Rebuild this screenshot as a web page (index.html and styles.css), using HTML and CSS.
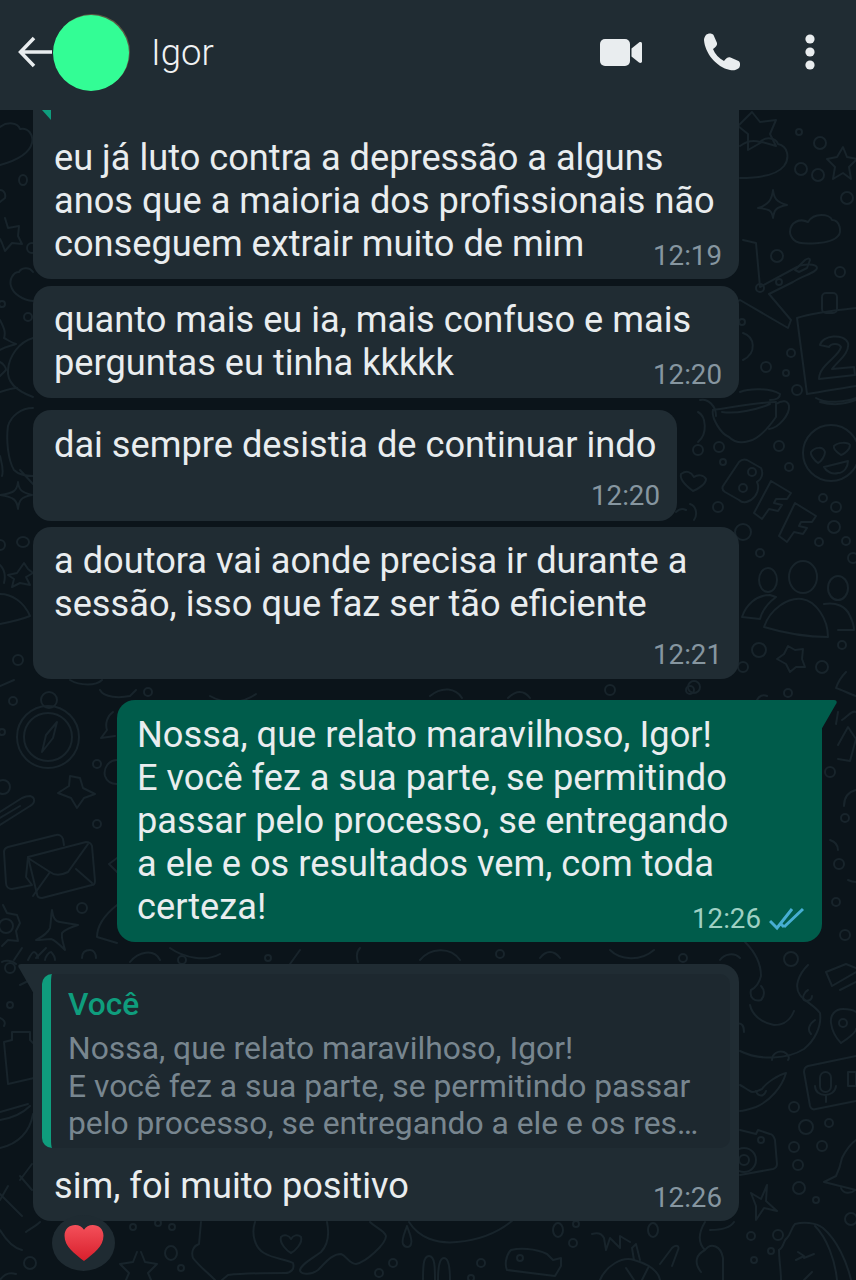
FILE: index.html
```html
<!DOCTYPE html>
<html lang="pt">
<head>
<meta charset="utf-8">
<title>Igor</title>
<link rel="stylesheet" href="styles.css">
</head>
<body>
<div class="app">
  <header class="topbar">
    <svg class="back" viewBox="0 0 36 32"><path d="M34 16H3M16 2 2.500 16 16 30"/></svg>
    <div class="avatar"></div>
    <div class="name">Igor</div>
    <div class="actions">
      <svg class="ic-video" viewBox="0 0 42 28"><rect x="0" y="0" width="30" height="27" rx="5"/><path d="M31.500 9.500 39 3.500c1.200-.9 3-.4 3 1v18c0 1.400-1.800 1.900-3 1L31.500 17.500z"/></svg>
      <svg class="ic-phone" viewBox="0 0 38 38"><path d="M3 2C5 0 9 0 10.500 2L14 10C14.500 12 13 14 10 16C12 21 16 25.500 21 28C23 25 25.500 23.500 27.500 24.500L35.500 28C37.500 29 37.500 33 36 35C33 37.500 30 37.500 27 37C13 34 2 20 1 7C1 5 2 3 3 2z"/></svg>
      <svg class="ic-dots" viewBox="0 0 12 36"><circle cx="6" cy="5" r="4.600"/><circle cx="6" cy="18" r="4.600"/><circle cx="6" cy="31" r="4.600"/></svg>
    </div>
  </header>
  <main class="chat">
    <svg class="doodles" viewBox="0 110 856 1170">
      <!-- right margin, upper -->
      <path d="M752 112l8 10 16-2-6 14 6 12-14-4-14 8 0-16-10-8z"/>
      <circle cx="799" cy="132" r="3"/><circle cx="820" cy="143" r="6"/><circle cx="801" cy="169" r="6"/><circle cx="818" cy="175" r="6"/><circle cx="847" cy="198" r="6"/>
      <path d="M740 146c8-6 14-6 20-4 6-6 16-4 18 2 10 2 12 14 6 22-8 10-26 12-44 12"/>
      <path d="M843 147l4 10 10 2-8 8 2 12-8-6-10 6 2-12-8-8 10-2z"/>
      <path d="M773 190c1 8 3 12 14 15-11 2-13 5-14 13-1-8-4-9-15-10 10-3 14-8 15-18z"/>
      <path d="M790 232c0-10 10-14 18-10 6-10 22-8 24-2 8 0 10 12 6 16-6 8-38 10-44 4-2-2-4-4-4-8z"/>
      <path d="M743 240l13 3 4 44 37-20c5-3 20-4 20 1 0 4-12 7-24 14l-24 12 22 26-3 8-48-28-16 10"/>
      <path d="M795 270l10-10c3-2 5-2 5 0l-3 8-8 4z"/>
      <circle cx="777" cy="256" r="6"/><circle cx="840" cy="272" r="5"/><circle cx="760" cy="288" r="4"/><circle cx="779" cy="282" r="3"/><circle cx="742" cy="322" r="3"/>
      <path d="M797 318c12-4 40-8 59-10M797 318l10 76c14-2 36-6 49-8"/>
      <rect x="822" y="293" width="15" height="20" rx="4"/>
      <path d="M820 345c2-10 24-12 28-2 2 10-10 18-16 26l22-2 1 8-36 4c0-14 20-22 22-32-2-4-10-4-12 0z"/>
      <path d="M743 333c12 4 14 20 0 27"/>
      <circle cx="791" cy="353" r="4"/><circle cx="766" cy="367" r="5"/><circle cx="786" cy="373" r="3"/><circle cx="797" cy="390" r="5"/>
      <path d="M740 392c10-4 30-4 40 2 0 4-4 6-10 6M816 398c10 6 30 4 40 0M820 402c14 4 26 2 36-2"/>
      <!-- cup and face -->
      <path d="M713 410c-2 8 8 24 16 27 6 6 14 6 20 4 10-2 20-14 27-24l0-14"/>
      <path d="M713 410c16-2 44-8 63-8M722 412c14 2 34-2 48-8"/>
      <path d="M776 404c6-4 12-4 13 2 1 8-10 22-20 23"/>
      <path d="M698 412c8 4 10 22 0 30M700 400c8-2 16 6 16 16"/>
      <circle cx="831" cy="453" r="28"/>
      <path d="M811 452c4-5 12-6 14 0 0 4-4 10-7 11-3-2-8-8-7-11z"/>
      <path d="M834 446c4-4 14-4 16-1 0 5-6 9-9 10-3-2-8-6-7-9z"/>
      <path d="M824 467l24-6c0 6-4 12-10 12-6 2-12-2-14-6z"/>
      <circle cx="698" cy="450" r="5"/><circle cx="719" cy="447" r="5"/><circle cx="723" cy="462" r="3"/><circle cx="779" cy="446" r="5"/><circle cx="789" cy="467" r="4"/>
      <path d="M681 474c6-4 10-2 13 3 4-3 10-2 12 2 0 5-8 10-13 12-4-3-14-10-12-17z"/>
      <!-- B F F -->
      <path d="M747 460l14 8c3 6 0 12-4 14 3 6 0 14-6 18-4 2-8 4-12 0l-14-8c-3-2-3-4-2-6l16-24c2-2 5-3 8-2z"/>
      <circle cx="752" cy="472" r="4"/><circle cx="743" cy="488" r="4"/>
      <path d="M771 481l20 12-4 6-11 0-2 4 8 2-4 6-9-2-7 10-8-6z"/>
      <path d="M795 503l21 13-4 6-11 0-2 4 8 2-4 6-9-2-7 10-8-6z"/>
      <circle cx="718" cy="507" r="5"/><circle cx="743" cy="532" r="8"/><circle cx="760" cy="553" r="4"/><circle cx="823" cy="498" r="4"/><circle cx="836" cy="507" r="5"/><circle cx="834" cy="527" r="6"/><circle cx="819" cy="542" r="4"/><circle cx="846" cy="541" r="4"/><circle cx="853" cy="558" r="5"/>
      <path d="M686 510c-4-2-8 0-10 2M690 504c6 2 8 10 4 16"/>
      <!-- people -->
      <ellipse cx="803" cy="577" rx="14" ry="16"/><ellipse cx="768" cy="580" rx="9" ry="12"/><ellipse cx="838" cy="588" rx="10" ry="12"/>
      <path d="M764 627c6-18 24-30 38-28 14 2 26 20 26 38-20 0-44-4-64-10z"/>
      <path d="M742 617c4-12 14-22 28-22l6 2c-8 6-14 14-16 22z"/>
      <path d="M824 604c12-2 22 2 26 12 4 8 4 14 4 14l-16 0"/>
      <circle cx="842" cy="645" r="4"/><circle cx="759" cy="650" r="7"/><circle cx="743" cy="667" r="5"/><circle cx="822" cy="667" r="6"/><circle cx="694" cy="687" r="6"/><circle cx="788" cy="693" r="4"/>
      <path d="M788 646l7 4 8-1-1 10 3 8-9 0-6 5-4-8-9-5 7-5z"/>
      <path d="M846 672c-4 4-8 10-10 16 6 2 14 6 20 8M757 700c2-4 6-6 10-4"/>
      <!-- right margin lower -->
      <path d="M838 712l-2 12M842 720c6-4 10-10 14-8M838 745l10-18 8 12-6 22-12-2"/>
      <circle cx="830" cy="772" r="5"/><circle cx="845" cy="818" r="4"/><circle cx="839" cy="864" r="5"/><circle cx="836" cy="902" r="4"/><circle cx="845" cy="935" r="5"/>
      <path d="M856 790c-8 2-12 8-12 16M830 840c6 2 8 6 8 10M848 880c4 2 8 2 8 2"/>
      <!-- compass, star, clip, letters -->
      <circle cx="48" cy="737" r="31"/><circle cx="48" cy="737" r="24"/><circle cx="49" cy="700" r="8"/>
      <path d="M57 722l-4 16-11 14 4-17z"/>
      <circle cx="13" cy="701" r="4"/><circle cx="97" cy="764" r="4"/><circle cx="97" cy="824" r="4"/><circle cx="82" cy="908" r="5"/><circle cx="2" cy="732" r="3"/>
      <path d="M80 778l3 10 12 6-11 4-7 10-6-10-13-5 11-7 1-10z"/>
      <circle cx="3" cy="787" r="7"/>
      <path d="M0 825l30-19c6-3 5-9 0-10-3 0-6 1-8 2L0 812M0 818l20-12"/>
      <path d="M28 857l-2 20 6 8-20 4c-3 0-6-2-6-6L4 852c0-3 1-4 4-5l48-12c3-1 6 1 7 4l1 6"/>
      <path d="M28 857l58-15c3 0 5 1 6 4l3 35c0 2-1 4-3 4l-50 13c-3 0-5-1-5-4z"/><path d="M28 858l22 14c5 4 12 3 18 0l20-28M33 896l17-24M76 869l16 14"/>
      <path d="M3 905l4 8 10 2 3 8-4 8 2 10-10-1-6 6"/><circle cx="6" cy="926" r="7"/>
      <path d="M52 910c1 8 3 12 8 12 6 1 12 2 18 3-7 2-13 5-16 8-1 6 2 12 3 17-6-6-10-10-14-11-4 0-10 1-15 1 7-4 12-7 14-12 1-6 1-12 2-18z"/>
      <path d="M28 960c2-4 4-8 6-8 2 0 4 4 4 6M45 960c0-3 4-8 6-8 2 2 4 6 4 8M82 958c0-6 4-8 8-8 4 0 6 4 6 8M2 962c2-2 10-2 14 2"/>
      <path d="M113 712c-6 4-8 12-6 18l-6 8 14-2M117 760c-8 0-14 8-12 16 2 6 6 8 12 8M117 858l-8 6 8 8M117 905c-10 8-20 20-20 32l20 6"/>
      <path d="M100 690c4 8 20 8 30 6l6-6M0 686l14-6M70 680c10 6 26 6 32 0M210 696c14 8 32 8 46-2M430 696c12-10 26-8 32 2M508 698c8-8 16-8 22 0"/>
      <circle cx="148" cy="692" r="4"/><circle cx="610" cy="690" r="5"/><circle cx="690" cy="690" r="4"/>
      <!-- gap 942-964 -->
      <path d="M130 962c8-10 24-14 30-2M170 948c14 10 36 14 50 6M300 950l-10 14M358 962c-2-6-2-10 2-14M420 960c10-12 30-14 40 0M540 958c6-8 14-8 20 0M610 950c10 10 30 12 44 0M720 960c4-6 14-8 20-2"/>
      <circle cx="182" cy="960" r="4"/><circle cx="268" cy="958" r="3"/><circle cx="500" cy="954" r="4"/><circle cx="683" cy="958" r="4"/>
      <!-- left margin upper -->
      <path d="M0 127c8-6 18-4 20 2 8-2 14 6 12 14-2 8-10 16-32 22"/>
      <ellipse cx="23" cy="180" rx="4" ry="5"/>
      <path d="M0 190c4 0 6 4 5 8l-5 4"/>
      <path d="M5 218l3 10 11-2-1 10 4 8-10-1-7 8-3-8-2-4"/>
      <circle cx="32" cy="248" r="5"/>
      <path d="M33 272c-4-6-12-4-14 0-6 0-10 8-8 14 2 8 12 14 22 15"/>
      <ellipse cx="28" cy="317" rx="4" ry="4"/><circle cx="2" cy="304" r="3"/>
      <path d="M0 320c4 8 6 12 4 18 4 2 6 4 12 6-6 2-10 2-16 6"/>
      <path d="M33 338c-14 4-24 18-25 32-1 10 6 20 25 27"/>
      <path d="M0 362c4 2 6 6 6 8l-6 6M0 392c6-2 12-4 17-4"/>
      <path d="M33 408c-12 0-22 8-25 18-2 14 0 34 6 44 4 4 10 6 19 6M0 456c2 8 4 14 2 20M20 470l13 14"/>
      <path d="M18 482c1 8 3 10 14 13-11 2-13 5-14 14-1-9-4-12-18-14 14-2 17-4 18-13z"/>
      <ellipse cx="23" cy="542" rx="6" ry="5"/><circle cx="0" cy="545" r="5"/>
      <path d="M24 563l4 6 5 4-7 4 4 8-10-2-8 4 2-8-6-4 9-2z"/>
      <path d="M0 594c12 0 24 8 30 22-10 4-20 6-30 8M0 565c4 4 6 10 4 18"/>
      <circle cx="18" cy="660" r="5"/>
      <!-- left margin lower -->
      <circle cx="10" cy="968" r="5"/><circle cx="10" cy="1005" r="3"/>
      <path d="M20 985l12-6M14 960l8-12M36 958l10-10"/>
      <path d="M12 1032h18l0 8 4 4v34l-26 6-4-42 8-2zM0 1018c4 2 6 4 4 8"/>
      <path d="M0 1112l28-8M0 1148c18-4 30-16 33-34M0 1120c12-2 22-6 30-14"/>
      <path d="M0 1194l22 22M8 1186l-8 14M20 1176l12 14M32 1164l-12 16"/>
      <circle cx="30" cy="1263" r="6"/>
      <path d="M40 1222c-4 4-12 8-14 10M0 1230c6 10 14 18 22 20M0 1280c4-6 10-8 16-6"/>
      <!-- bottom strip -->
      <path d="M141 1252l4 10 12 2-9 9 3 7M137 1252l-4 10-13 2 9 9-3 7"/>
      <circle cx="133" cy="1227" r="3"/><circle cx="158" cy="1223" r="3"/><circle cx="172" cy="1227" r="3"/><ellipse cx="171" cy="1253" rx="6" ry="7"/><circle cx="181" cy="1268" r="3"/>
      <path d="M201 1222l-2 22c-6 2-8 8-6 14 6 8 14 14 22 22"/>
      <path d="M255 1222c-4 12 0 26 9 31 10 6 22 6 29 10 2 6-2 10-8 10-18 0-38 0-57 2l-6 5"/>
      <path d="M281 1237c3-3 8-2 10 2 2-4 7-5 10-2 2 6-6 14-10 16-4-2-12-10-10-16z"/>
      <path d="M327 1222c2 10 2 22-6 30-8 6-20 12-21 18 0 4 10 6 18 0 8-8 14-16 23-16 6 2 8 10 15 10 10-2 30-20 30-28-2-6-10-8-16-14"/>
      <path d="M407 1226c-2 6-6 14-4 18 2 4 7 4 8 0 2-4-2-12-4-18z"/>
      <path d="M409 1222c10 16 28 22 48 20 22-2 42-10 56-22"/>
      <path d="M423 1280c0-12 0-24 6-24 6 0 6 12 6 24M438 1280c0-12 1-22 6-22 5 0 6 10 6 22"/>
      <circle cx="393" cy="1263" r="4"/><circle cx="379" cy="1273" r="4"/><circle cx="481" cy="1263" r="4"/><circle cx="471" cy="1278" r="3"/>
      <path d="M511 1250c8-2 24-2 36 4l6 6 8-2 0 8-6 10-48-6c-2-4-2-14 4-20z"/><circle cx="520" cy="1258" r="3"/>
      <ellipse cx="558" cy="1230" rx="5" ry="7"/><circle cx="576" cy="1224" r="3"/><circle cx="573" cy="1243" r="4"/><ellipse cx="653" cy="1230" rx="5" ry="7"/>
      <path d="M592 1234c6-2 10 0 12 4l2 12 4-12 10 10 0-12 10 6"/>
      <path d="M600 1280c6-14 22-24 34-20 14 4 24 10 26 20M634 1260l-2-12 4-4 4 16M660 1264l12-16c4-4 8-2 6 2l-6 16M626 1268l8 12M648 1268l-6 12"/>
      <path d="M705 1222c-6 10-8 20 0 28-8 4-12 12-4 22M705 1250c6-8 16-4 18 8l0 22M710 1230c10 0 20-2 24-8"/>
      <circle cx="751" cy="1236" r="4"/><circle cx="778" cy="1235" r="5"/><circle cx="771" cy="1251" r="3"/><circle cx="754" cy="1260" r="3"/>
      <path d="M779 1250c6-4 4-10 8-12 4-4 4-10 8-14 8-2 20-2 28 4 14 12 24 34 28 52"/>
      <path d="M815 1226c12 12 20 34 22 54M779 1250c0 10 2 20 2 30M796 1260l8-4-6-4M814 1254l-10 4M812 1272l-8 8"/>
      <!-- right margin bottom -->
      <circle cx="791" cy="959" r="7"/>
      <path d="M745 942c10 10 16 22 16 34-2 8-6 12-10 14-2 8 4 12 10 10 4-4 4-10 0-14M808 965c-10 10-14 22-8 30 4 6 14 10 20 18 2 14-6 28-16 36-16 10-44 12-64 2"/>
      <path d="M750 1005c2 10 12 18 24 20 10 0 16-4 20-14M808 990c-4 2-6 8-4 10 4 2 8 0 8-4M736 1024c6-2 8 2 8 8M815 1020c-6 4-8 10-4 14M772 1060c0-6 6-10 12-8 4 2 6 6 4 8"/>
      <path d="M826 972l20-8 10 4M826 972l6 14 24-14M840 990l16-8"/>
      <path d="M843 1009c-8 0-13 6-12 14 1 8 6 16 10 20 6-4 15-10 15-14M856 1012c-4-3-8-3-13-3"/><circle cx="843" cy="1023" r="4"/>
      <path d="M856 1056l-48 10c-3 1-4 3-4 6l6 34c1 3 3 4 6 3l40-8"/>
      <rect x="820" y="1072" width="11" height="20" rx="5.500"/><path d="M815 1086c0 12 20 12 21 0M826 1096v6"/>
      <path d="M848 1072h8v14h-8z"/>
      <path d="M786 1073c-8 2-20 10-24 16-4 2-10 4-12 2-4-2-6-4-10-6M786 1073c-4 14-16 28-30 34-6 2-12 4-16 4"/><path d="M756 1091c2 6 8 6 10 0"/>
      <circle cx="794" cy="1107" r="5"/><circle cx="806" cy="1127" r="7"/><circle cx="829" cy="1123" r="4"/><circle cx="794" cy="1147" r="5"/><circle cx="822" cy="1146" r="5"/><circle cx="798" cy="1165" r="5"/><circle cx="799" cy="1188" r="6"/><circle cx="816" cy="1200" r="3"/><circle cx="851" cy="1219" r="6"/>
      <path d="M740 1130l16 4 2-4 12 4c3 0 4 3 5 6l2 24c0 2-1 4-4 5l-33 6"/><circle cx="744" cy="1160" r="12"/><circle cx="744" cy="1160" r="5"/><circle cx="761" cy="1140" r="3"/>
      <path d="M856 1140c-6 4-10 10-14 18-2 10-4 14-6 18l-12 6 32 8"/><path d="M841 1188c2 6 10 6 14 2"/>
      <path d="M751 1193l10 6 6-14-1 16 11 10-13-3-8 12 0-14z"/>
    </svg>
    <div class="thread">
      <article class="msg in first">
        <span class="cut-bar"></span>
        <p class="text">eu já luto contra a depressão a alguns<br>anos que a maioria dos profissionais não<br>conseguem extrair muito de mim</p>
        <div class="meta over"><span class="time">12:19</span></div>
      </article>
      <article class="msg in gap-s">
        <p class="text">quanto mais eu ia, mais confuso e mais<br>perguntas eu tinha kkkkk</p>
        <div class="meta over"><span class="time">12:20</span></div>
      </article>
      <article class="msg in short gap-m">
        <p class="text">dai sempre desistia de continuar indo</p>
        <div class="meta own"><span class="time">12:20</span></div>
      </article>
      <article class="msg in gap-xs">
        <p class="text">a doutora vai aonde precisa ir durante a<br>sessão, isso que faz ser tão eficiente</p>
        <div class="meta own"><span class="time">12:21</span></div>
      </article>
      <article class="msg out gap-l">
        <svg class="tail tail-r" viewBox="0 0 16 30"><path d="M0 0h13c2.500 0 3.500 2 2 4L0 30z"/></svg>
        <p class="text">Nossa, que relato maravilhoso, Igor!<br>E você fez a sua parte, se permitindo<br>passar pelo processo, se entregando<br>a ele e os resultados vem, com toda<br>certeza!</p>
        <div class="meta over">
          <span class="time">12:26</span>
          <svg class="ticks" viewBox="0 0 36 24"><path d="M1 14l7 7L23 2M15 20 34 2M12 17l3 3"/></svg>
        </div>
      </article>
      <article class="msg in reply-msg gap-xl">
        <svg class="tail tail-l" viewBox="0 0 16 30"><path d="M16 0H3C.500 0-.500 2 1 4l15 26z"/></svg>
        <div class="quote">
          <div class="quote-who">Você</div>
          <p class="quote-text">Nossa, que relato maravilhoso, Igor!<br>E você fez a sua parte, se permitindo passar<br>pelo processo, se entregando a ele e os res…</p>
        </div>
        <p class="text">sim, foi muito positivo</p>
        <div class="meta over"><span class="time">12:26</span></div>
        <div class="reaction">
          <svg viewBox="0 0 40 38"><defs><linearGradient id="hg" x1="0" y1="0" x2="0" y2="1"><stop offset="0" stop-color="#f4505a"/><stop offset="1" stop-color="#d81f2c"/></linearGradient></defs><path d="M20 37C10 29 0 22 0 11 0 4 5 0 11 0c4 0 7 2 9 5 2-3 5-5 9-5 6 0 11 4 11 11 0 11-10 18-20 26z" fill="url(#hg)"/></svg>
        </div>
      </article>
    </div>
  </main>
</div>
</body>
</html>
```
FILE: styles.css
```css
* { box-sizing: border-box; }
html, body { margin: 0; padding: 0; background: #0b141a; }
body { font-family: Roboto, "Noto Sans", sans-serif; color: #e9edef; }
.app { width: 856px; height: 1280px; display: flex; flex-direction: column; overflow: hidden; }

.topbar { height: 110px; flex: none; background: #202c33; display: flex; align-items: center; padding: 0 40px 6px 18px; position: relative; z-index: 2; }
.back { width: 36px; height: 32px; flex: none; fill: none; stroke: #e9edef; stroke-width: 3.500; }
.avatar { width: 76px; height: 76px; border-radius: 50%; background: #33fd95; margin: 2px 0 0 -1px; flex: none; box-shadow: 1px -1px 0 #5c5a44; }
.name { font-size: 36.500px; font-weight: 300; margin-left: 22px; color: #f0f2f3; }
.actions { margin-left: auto; display: flex; align-items: center; }
.actions svg { fill: #e9edef; flex: none; }
.ic-video { width: 42px; height: 28px; margin-top: 2px; }
.ic-phone { width: 38px; height: 38px; margin-left: 61px; }
.ic-dots { width: 12px; height: 36px; margin-left: 63px; }

.chat { flex: 1; position: relative; overflow: hidden; min-height: 0; }
.doodles { position: absolute; left: 0; top: 0; width: 856px; height: 1170px; fill: none; stroke: #18242b; stroke-width: 2; stroke-linejoin: round; stroke-linecap: round; }
.thread { position: relative; display: flex; flex-direction: column; align-items: flex-start; padding-left: 33px; }

.msg { position: relative; width: 706px; background: #202c33; border-radius: 18px; padding: 12px 17px 9px 21px; }
.msg.out { background: #005c4b; width: 705px; margin-left: 84px; border-top-right-radius: 0; padding-top: 13px; padding-left: 20px; }
.msg.short { width: 644px; padding-top: 13px; padding-bottom: 10px; }
.first { border-top-left-radius: 0; border-top-right-radius: 0; padding-top: 26px; }
.gap-xs { margin-top: 6px; }
.gap-s { margin-top: 7px; }
.gap-m { margin-top: 12px; }
.gap-l { margin-top: 21px; }
.gap-xl { margin-top: 22px; }

.cut-bar { position: absolute; left: 9px; top: 0; width: 9px; height: 10px; background: #0f9d7d; clip-path: polygon(0 0, 100% 0, 100% 100%); }
.text { margin: 0; font-size: 36.200px; line-height: 43px; color: #e9edef; white-space: nowrap; }
.meta { display: flex; justify-content: flex-end; align-items: center; height: 30px; }
.meta.over { margin-top: -24px; margin-bottom: -1px; }
.meta.own { margin-top: 15px; }
.time { font-size: 27.700px; line-height: 30px; color: #8696a0; }
.out .time { color: #9fd0c3; }
.ticks { width: 36px; height: 24px; margin-left: 8px; fill: none; stroke: #53bdeb; stroke-width: 3; opacity: .85; }
.tail { position: absolute; top: 0; width: 16px; height: 30px; }
.tail-r { right: -15px; fill: #005c4b; }
.tail-l { left: -15px; fill: #202c33; }
.reply-msg { border-top-left-radius: 0; padding-top: 10px; }

.quote { margin-left: -12px; margin-right: -8px; height: 174px; background: #1d282f; border-radius: 10px; border-left: 9px solid #0f9d7d; padding: 14px 10px 0 17px; margin-bottom: 16px; }
.quote-who { font-size: 31.700px; line-height: 34px; font-weight: 500; color: #0f9d7d; }
.quote-text { margin: 8px 0 0; font-size: 31.800px; line-height: 37.500px; color: #78868f; white-space: nowrap; }

.reaction { position: absolute; left: 19px; bottom: -50px; width: 63px; height: 56px; border-radius: 50%; background: #1f2b32; display: flex; align-items: center; justify-content: center; }
.reaction svg { width: 42px; height: 37px; }
```
